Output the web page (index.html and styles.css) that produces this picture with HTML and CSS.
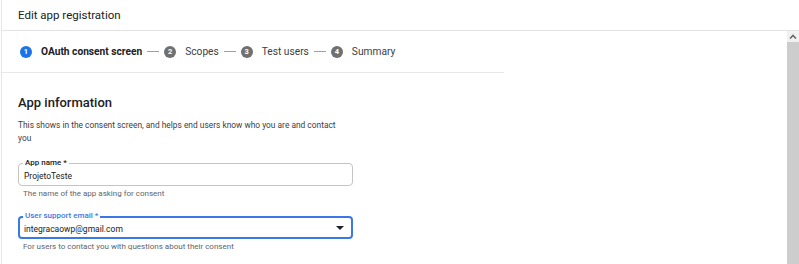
FILE: index.html
```html
<!DOCTYPE html>
<html lang="en">
<head>
    <meta charset="UTF-8">
    <meta name="viewport" content="width=device-width, initial-scale=1.0">
    <title>Edit app registration</title>
    <link rel="stylesheet" href="styles.css">
</head>
<body>

<div class="page">
    <div class="page-header">Edit app registration</div>

    <div class="page-body">
        <div class="main">
            <div class="stepper">
                <span class="step-num active">1</span>
                <span class="step-label current">OAuth consent screen</span>
                <span class="step-dash"></span>
                <span class="step-num">2</span>
                <span class="step-label">Scopes</span>
                <span class="step-dash"></span>
                <span class="step-num">3</span>
                <span class="step-label">Test users</span>
                <span class="step-dash"></span>
                <span class="step-num">4</span>
                <span class="step-label">Summary</span>
            </div>

            <div class="section">
                <h2>App information</h2>
                <p class="section-desc">This shows in the consent screen, and helps end users know who you are and contact you</p>

                <div class="field">
                    <div class="field-box">
                        <label class="field-label">App name *</label>
                        <span class="field-value">ProjetoTeste</span>
                    </div>
                    <div class="field-hint">The name of the app asking for consent</div>
                </div>

                <div class="field focused">
                    <div class="field-box">
                        <label class="field-label">User support email *</label>
                        <span class="field-value">integracaowp@gmail.com</span>
                        <span class="field-arrow"></span>
                    </div>
                    <div class="field-hint">For users to contact you with questions about their consent</div>
                </div>
            </div>
        </div>

        <div class="scrollbar">
            <div class="scroll-btn">
                <svg width="8" height="5" viewBox="0 0 8 5"><path d="M1 4.5 L4 1.5 L7 4.5" fill="none" stroke="#6b6b6b" stroke-width="1.6"/></svg>
            </div>
            <div class="scroll-thumb"></div>
        </div>
    </div>
</div>

</body>
</html>
```

FILE: styles.css
```css
body {
    margin: 0;
    font-family: Roboto, "Liberation Sans", Arial, sans-serif;
    color: #202124;
    background-color: #fff;
}
.page {
    height: 264px;
    display: flex;
    flex-direction: column;
    border-left: 1px solid #e6e6e6;
    margin-left: 1px;
    overflow: hidden;
}
.page-header {
    height: 30px;
    flex-shrink: 0;
    display: flex;
    align-items: center;
    padding-left: 16px;
    font-size: 11.5px;
    border-bottom: 1px solid #e3e3e3;
}
.page-body {
    flex: 1;
    display: flex;
    min-height: 0;
}
.main {
    flex: 1;
}
.stepper {
    width: 484px;
    height: 41px;
    display: flex;
    align-items: center;
    padding-left: 18px;
    border-bottom: 1px solid #e8e8e8;
    font-size: 10.2px;
    color: #3c4043;
}
.step-num {
    width: 12px;
    height: 12px;
    border-radius: 50%;
    background-color: #707070;
    color: #fff;
    font-size: 7.5px;
    font-weight: 700;
    display: flex;
    align-items: center;
    justify-content: center;
}
.step-num.active {
    background-color: #1a73e8;
}
.step-label {
    margin-left: 9px;
}
.step-label.current {
    font-weight: 700;
    color: #202124;
}
.step-dash {
    width: 12px;
    height: 1px;
    background-color: #a0a0a0;
    margin: 0 5px;
}
.section {
    padding: 21px 0 0 16px;
    width: 335px;
}
.section h2 {
    margin: 0;
    font-size: 13px;
    font-weight: 500;
    line-height: 18px;
}
.section-desc {
    max-width: 325px;
    margin: 7px 0 0;
    font-size: 8.4px;
    line-height: 13px;
    color: #3c4043;
}
.field {
    margin-top: 18px;
}
.field-box {
    position: relative;
    height: 21px;
    border: 1px solid #c4c4c4;
    border-radius: 4px;
    display: flex;
    align-items: center;
    padding: 0 5px;
}
.field-label {
    position: absolute;
    left: 4px;
    top: -6px;
    padding: 0 2px;
    background-color: #fff;
    font-size: 8px;
    font-weight: 500;
    line-height: 10px;
    color: #202124;
}
.field-value {
    flex: 1;
    font-size: 8.5px;
    padding-top: 2px;
}
.field-arrow {
    width: 0;
    height: 0;
    border-left: 4px solid transparent;
    border-right: 4px solid transparent;
    border-top: 4px solid #202124;
    margin-right: 3px;
}
.field-hint {
    margin: 3px 0 0 5px;
    font-size: 8px;
    line-height: 10px;
    color: #5f6368;
}
.field.focused {
    margin-top: 17px;
}
.field.focused .field-box {
    border: 2px solid #3b78e7;
    height: 19px;
    padding: 0 4px;
}
.field.focused .field-label {
    color: #3b78e7;
    left: 3px;
    top: -7px;
}
.field.focused .field-hint {
    margin-top: 3px;
}
.scrollbar {
    width: 12px;
    display: flex;
    flex-direction: column;
    background-color: #f1f1f1;
}
.scroll-btn {
    height: 11px;
    display: flex;
    align-items: center;
    justify-content: center;
}
.scroll-thumb {
    flex: 1;
    background-color: #cdcdcd;
}
```
